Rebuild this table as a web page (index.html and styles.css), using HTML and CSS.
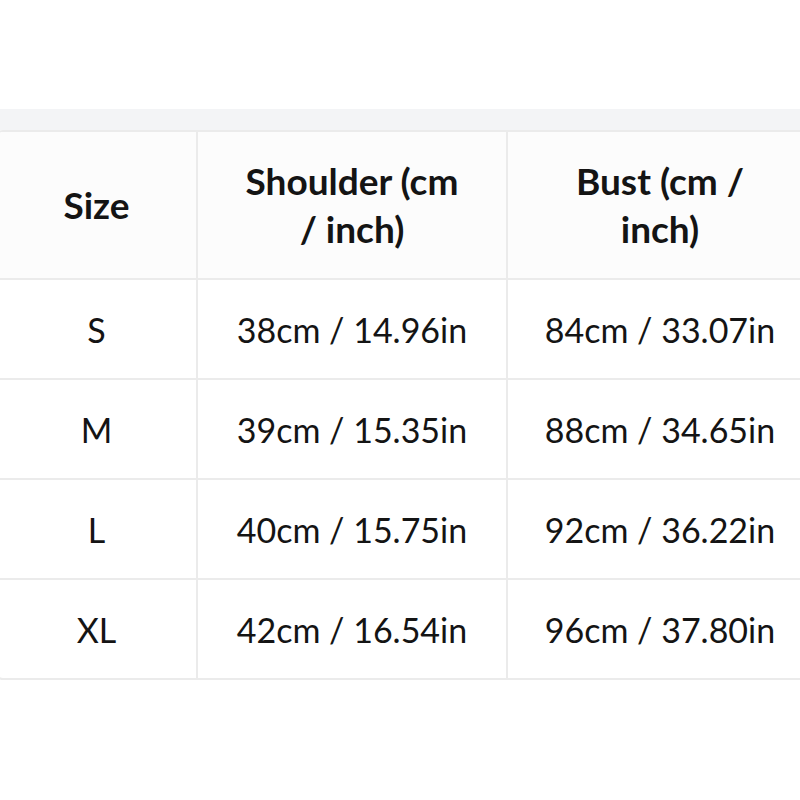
FILE: index.html
```html
<!DOCTYPE html>
<html>
<head>
<meta charset="utf-8">
<link rel="stylesheet" href="styles.css">
</head>
<body>
<div class="page">
  <div class="band"></div>
  <div class="table-wrap">
    <table class="size-table">
      <colgroup>
        <col class="c1"><col class="c2"><col class="c3">
      </colgroup>
      <thead>
        <tr>
          <th>Size</th>
          <th>Shoulder (cm<br>/ inch)</th>
          <th>Bust (cm /<br>inch)</th>
        </tr>
      </thead>
      <tbody>
        <tr><td>S</td><td>38cm / 14.96in</td><td>84cm / 33.07in</td></tr>
        <tr><td>M</td><td>39cm / 15.35in</td><td>88cm / 34.65in</td></tr>
        <tr><td>L</td><td>40cm / 15.75in</td><td>92cm / 36.22in</td></tr>
        <tr><td>XL</td><td>42cm / 16.54in</td><td>96cm / 37.80in</td></tr>
      </tbody>
    </table>
  </div>
</div>
</body>
</html>
```

FILE: styles.css
```css
html, body {
  margin: 0;
  padding: 0;
  background: #ffffff;
  overflow: hidden;
}
.page {
  box-sizing: border-box;
  padding-top: 109px;
  width: 800px;
  height: 800px;
  overflow: hidden;
  font-family: Lato, "Noto Sans", sans-serif;
  color: #141414;
}
.band {
  height: 21px;
  background: #f3f4f6;
  width: 800px;
}
.table-wrap {
  width: 816px;
  margin-left: -5px;
  border: 2px solid #ebebeb;
  border-radius: 8px;
  overflow: hidden;
}
.size-table {
  border-collapse: collapse;
  table-layout: fixed;
  width: 816px;
}
.c1 { width: 200px; }
.c2 { width: 310px; }
.c3 { width: 306px; }
.size-table th,
.size-table td {
  border-right: 2px solid #ebebeb;
  border-bottom: 2px solid #ebebeb;
  text-align: center;
  padding: 0;
}
.size-table tr:last-child td { border-bottom: none; }
.size-table th {
  height: 146px;
  font-weight: 700;
  font-size: 37px;
  line-height: 48px;
  background: #fcfcfc;
}
.size-table td {
  height: 98px;
  font-size: 34px;
  font-weight: 400;
}
```
